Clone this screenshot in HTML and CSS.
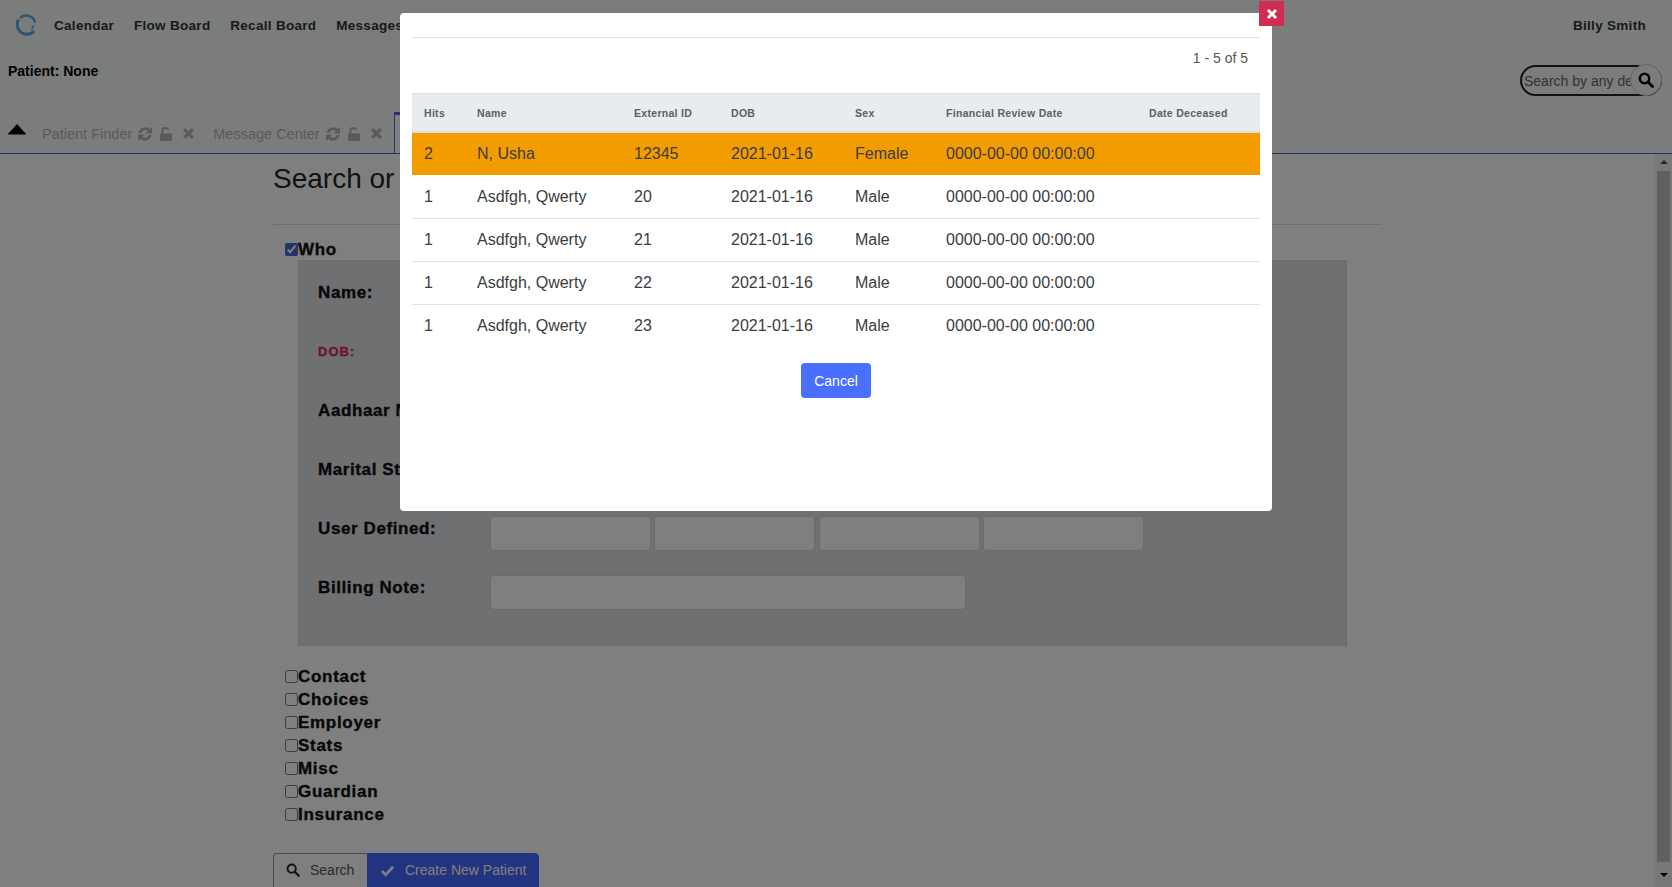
FILE: index.html
```html
<!DOCTYPE html>
<html lang="en">
<head>
<meta charset="UTF-8" />
<meta name="viewport" content="width=device-width, initial-scale=1" />
<title>Search or Add Patient</title>
<link rel="stylesheet" href="styles.css">
</head>
<body>

<header class="topbar">
  <div class="nav-row">
    <svg class="logo" viewBox="0 0 22 22" width="22" height="22">
      <path d="M5 4A9 9 0 0 1 20 8.500" fill="none" stroke="#5ea6e8" stroke-width="2.400"/>
      <path d="M3.500 5.500A9.500 9.500 0 0 0 3 14A9.500 9.500 0 0 0 19 17" fill="none" stroke="#5ea6e8" stroke-width="3"/>
      <path d="M16.500 15.500A7.500 7.500 0 0 0 18.500 11" fill="none" stroke="#5ea6e8" stroke-width="1.400"/>
    </svg>
    <nav class="menu">
      <a>Calendar</a>
      <a>Flow Board</a>
      <a>Recall Board</a>
      <a>Messages</a>
    </nav>
    <span class="user">Billy Smith</span>
  </div>
  <div class="patient-row">
    <strong class="patient">Patient: None</strong>
    <div class="searchbox">
      <span class="searchbox-text">Search by any de</span>
      <span class="searchbox-btn">
        <svg viewBox="0 0 16 16" width="16" height="16"><circle cx="6.500" cy="6.500" r="4.700" fill="none" stroke="#000" stroke-width="2.400"/><path d="M10 10l4.500 4.500" stroke="#000" stroke-width="2.800" stroke-linecap="round"/></svg>
      </span>
    </div>
  </div>
  <div class="tab-row">
    <svg class="caret" viewBox="0 0 20 12" width="20" height="12"><path d="M1.500 11h17L10 1.500z" fill="#000" stroke="#000" stroke-linejoin="round"/></svg>
    <div class="tab">
      Patient Finder
      <svg class="tab-icon" viewBox="0 0 16 16"><path d="M1.500 7A6.600 6.600 0 0 1 12.700 3.300L15 1v6.500H8.500l2.300-2.300A4 4 0 0 0 4.200 7zM14.500 9A6.600 6.600 0 0 1 3.300 12.700L1 15V8.500h6.500l-2.300 2.300A4 4 0 0 0 11.800 9z"/></svg>
      <svg class="tab-icon" viewBox="0 0 16 16"><path d="M2 7.500h1.500V4.800a3.800 3.800 0 0 1 7.500-.8H9a1.900 1.900 0 0 0-3.600.8v2.700H14v7.500H2z"/></svg>
      <svg class="tab-icon tab-x" viewBox="0 0 12 12"><path d="M2 2l8 8M10 2l-8 8" stroke="#b4b4b4" stroke-width="3"/></svg>
    </div>
    <div class="tab">
      Message Center
      <svg class="tab-icon" viewBox="0 0 16 16"><path d="M1.500 7A6.600 6.600 0 0 1 12.700 3.300L15 1v6.500H8.500l2.300-2.300A4 4 0 0 0 4.200 7zM14.500 9A6.600 6.600 0 0 1 3.300 12.700L1 15V8.500h6.500l-2.300 2.300A4 4 0 0 0 11.800 9z"/></svg>
      <svg class="tab-icon" viewBox="0 0 16 16"><path d="M2 7.500h1.500V4.800a3.800 3.800 0 0 1 7.500-.8H9a1.900 1.900 0 0 0-3.600.8v2.700H14v7.500H2z"/></svg>
      <svg class="tab-icon tab-x" viewBox="0 0 12 12"><path d="M2 2l8 8M10 2l-8 8" stroke="#b4b4b4" stroke-width="3"/></svg>
    </div>
    <div class="tab-active"></div>
  </div>
</header>

<div class="page">
  <main class="content">
    <h1 class="title">Search or</h1>
    <hr class="rule">

    <label class="section"><input type="checkbox" checked>Who</label>
    <div class="who-panel">
      <div class="who-row"><span class="who-label">Name:</span></div>
      <div class="who-row"><span class="who-label who-dob">DOB:</span></div>
      <div class="who-row"><span class="who-label">Aadhaar Number:</span></div>
      <div class="who-row"><span class="who-label">Marital Status:</span></div>
      <div class="who-row">
        <span class="who-label">User Defined:</span>
        <div class="fields">
          <input class="field" type="text">
          <input class="field" type="text">
          <input class="field" type="text">
          <input class="field" type="text">
        </div>
      </div>
      <div class="who-row">
        <span class="who-label">Billing Note:</span>
        <div class="fields">
          <input class="field field-wide" type="text">
        </div>
      </div>
    </div>

    <div class="section-list">
      <label class="section"><input type="checkbox">Contact</label>
      <label class="section"><input type="checkbox">Choices</label>
      <label class="section"><input type="checkbox">Employer</label>
      <label class="section"><input type="checkbox">Stats</label>
      <label class="section"><input type="checkbox">Misc</label>
      <label class="section"><input type="checkbox">Guardian</label>
      <label class="section"><input type="checkbox">Insurance</label>
    </div>

    <div class="actions">
      <button class="btn btn-search">
        <svg viewBox="0 0 16 16" width="14" height="14"><circle cx="6.500" cy="6.500" r="4.700" fill="none" stroke="#212529" stroke-width="2.200"/><path d="M10 10l4.500 4.500" stroke="#212529" stroke-width="2.600" stroke-linecap="round"/></svg>
        Search
      </button>
      <button class="btn btn-create">
        <svg viewBox="0 0 16 16" width="15" height="15"><path d="M2 8.500l4 4 8-8.500" fill="none" stroke="#fff" stroke-width="3"/></svg>
        Create New Patient
      </button>
    </div>
  </main>
  <div class="scrollbar">
    <span class="arrow-up"></span>
    <div class="thumb"></div>
    <span class="arrow-down"></span>
  </div>
</div>

<div class="overlay">
  <div class="modal">
    <button class="modal-close" aria-label="Close">
      <svg viewBox="0 0 12 12" width="12" height="12"><path d="M2 2l8 8M10 2l-8 8" stroke="#fff" stroke-width="3"/></svg>
    </button>
    <hr class="modal-rule">
    <div class="pager">1 - 5 of 5</div>
    <table class="hits">
      <colgroup>
        <col class="col-hits"><col class="col-name"><col class="col-ext"><col class="col-dob"><col class="col-sex"><col class="col-fin"><col>
      </colgroup>
      <thead>
        <tr>
          <th>Hits</th>
          <th>Name</th>
          <th>External ID</th>
          <th>DOB</th>
          <th>Sex</th>
          <th>Financial Review Date</th>
          <th>Date Deceased</th>
        </tr>
      </thead>
      <tbody>
        <tr class="hit-top"><td>2</td><td>N, Usha</td><td>12345</td><td>2021-01-16</td><td>Female</td><td>0000-00-00 00:00:00</td><td></td></tr>
        <tr><td>1</td><td>Asdfgh, Qwerty</td><td>20</td><td>2021-01-16</td><td>Male</td><td>0000-00-00 00:00:00</td><td></td></tr>
        <tr><td>1</td><td>Asdfgh, Qwerty</td><td>21</td><td>2021-01-16</td><td>Male</td><td>0000-00-00 00:00:00</td><td></td></tr>
        <tr><td>1</td><td>Asdfgh, Qwerty</td><td>22</td><td>2021-01-16</td><td>Male</td><td>0000-00-00 00:00:00</td><td></td></tr>
        <tr><td>1</td><td>Asdfgh, Qwerty</td><td>23</td><td>2021-01-16</td><td>Male</td><td>0000-00-00 00:00:00</td><td></td></tr>
      </tbody>
    </table>
    <div class="modal-foot"><button class="btn-cancel">Cancel</button></div>
  </div>
</div>

</body>
</html>
```

FILE: styles.css
```css
html, body { height: 100%; }
body { margin: 0; height: 100vh; overflow: hidden; display: flex; flex-direction: column; font-family: "Liberation Sans", Arial, sans-serif; color: #212529; background: #fff; }

/* top bar */
.topbar { background: #f6faf8; height: 154px; flex: none; box-sizing: border-box; border-bottom: 1px solid #4a66d8; display: flex; flex-direction: column; }
.nav-row { display: flex; align-items: center; height: 50px; padding-left: 15px; box-sizing: border-box; }
.logo { margin-right: 17px; }
.menu { display: flex; gap: 19.800px; }
.menu a, .user { font-size: 13.500px; font-weight: bold; letter-spacing: .3px; color: #333; }
.user { margin-left: auto; margin-right: 26px; }
.patient-row { height: 62px; display: flex; padding-left: 8px; position: relative; }
.patient { font-size: 14px; margin-top: 13px; color: #000; }
.searchbox { margin-left: auto; margin-right: 10px; margin-top: 15px; width: 142px; height: 31px; box-sizing: border-box; border: 2px solid #222; border-radius: 16px; display: flex; align-items: center; padding-left: 2px; position: relative; background: #f6faf8; }
.searchbox-text { font-size: 14px; color: #666; white-space: nowrap; overflow: hidden; width: 108px; }
.searchbox-btn { position: absolute; right: -2px; top: -3px; width: 30px; height: 30px; border: 1px solid #ccc; border-radius: 50%; background: #f6faf8; display: flex; align-items: center; justify-content: center; }
.tab-row { flex: 1; display: flex; align-items: center; position: relative; padding-left: 7px; }
.caret { margin-right: 15px; margin-top: -7px; }
.tab { display: flex; align-items: center; gap: 4px; font-size: 14.500px; color: #b4b4b4; margin-right: 11px; white-space: nowrap; padding-top: 2px; }
.tab + .tab { margin-left: 7px; }
.tab-icon { width: 16px; height: 16px; fill: #b4b4b4; margin-left: 1px; }
.tab-x { width: 13px; height: 13px; margin-left: 4px; }
.tab-active { align-self: stretch; width: 300px; border: 1px solid #4a66d8; border-top-width: 3px; border-bottom: 0; box-sizing: border-box; background: #fff; }

/* page below the bar */
.page { flex: 1; display: flex; min-height: 0; }
.content { flex: 1; padding-left: 273px; overflow: hidden; }
.title { font-size: 28px; font-weight: normal; line-height: 34px; margin: 8px 0 0; }
.rule { width: 1109px; margin: 28px 0 13px; border: 0; border-top: 1px solid #ddd; }
.section { display: flex; align-items: center; height: 23px; font-size: 17px; font-weight: bold; letter-spacing: .7px; -webkit-text-stroke: .4px #111; color: #111; margin-left: 12px; }
.section input { margin: 0; width: 13px; height: 13px; accent-color: #4a66d8; }
.who-panel { width: 1049px; height: 386px; margin: -1px 0 0 25px; box-sizing: border-box; background: #dfe1e5; border: 1px solid #d5d7db; padding-top: 16px; }
.who-row { display: flex; height: 59px; padding-left: 19px; }
.who-label { width: 172px; flex: none; font-size: 17px; font-weight: bold; letter-spacing: .6px; -webkit-text-stroke: .4px #111; color: #111; line-height: 32px; }
.who-dob { font-size: 13px; letter-spacing: 1px; color: #d92c58; -webkit-text-stroke: .4px #d92c58; }
.fields { display: flex; gap: 3.400px; margin-top: 3px; align-self: flex-start; }
.field { width: 161px; height: 35px; box-sizing: border-box; border: 1px solid #d5d7db; border-radius: 4px; background: #fff; }
.field-wide { width: 476px; }
.section-list { margin-top: 19px; display: flex; flex-direction: column; }
.actions { display: flex; margin-top: 27px; }
.btn { height: 36px; padding-bottom: 3px; font: 14px "Liberation Sans", Arial, sans-serif; display: flex; align-items: center; border: 1px solid #999; }
.btn-search { width: 94px; gap: 10px; padding-left: 12px; color: #555; background: #fff; border-radius: 4px 0 0 0; border-right: 0; }
.btn-create { width: 172px; gap: 10px; padding-left: 12px; color: #fff; background: #4568ff; border-color: #4568ff; border-radius: 0 4px 0 0; white-space: nowrap; }

.scrollbar { width: 17px; flex: none; background: #f1f1f1; display: flex; flex-direction: column; align-items: center; }
.arrow-up { flex: none; margin-top: 6px; width: 0; height: 0; border: 4px solid transparent; border-top: 0; border-bottom: 4px solid #505050; }
.thumb { flex: none; width: 13px; height: 691px; margin-top: 7px; background: #c1c1c1; }
.arrow-down { flex: none; margin-top: 11px; width: 0; height: 0; border: 4px solid transparent; border-bottom: 0; border-top: 4px solid #000; }

/* modal */
.overlay { position: fixed; inset: 0; background: rgba(0, 0, 0, .5); }
.modal { position: absolute; left: 400px; top: 13px; width: 872px; height: 498px; box-sizing: border-box; padding: 0 12px; background: #fff; border-radius: 4px; color: #3a3d40; }
.modal-close { position: absolute; right: -12px; top: -12px; width: 25px; height: 25px; padding: 0; border: 0; background: #d12d52; display: flex; align-items: center; justify-content: center; }
.modal-rule { margin: 24px 0 0; border: 0; border-top: 1px solid #dee2e6; }
.pager { text-align: right; font-size: 14px; line-height: 20px; margin-top: 10px; padding-right: 12px; color: #555; }
.hits { width: 848px; margin-top: 25px; border-collapse: collapse; table-layout: fixed; font-size: 16px; }
.col-hits { width: 53px; }
.col-name { width: 157px; }
.col-ext { width: 97px; }
.col-dob { width: 124px; }
.col-sex { width: 91px; }
.col-fin { width: 203px; }
.hits th { height: 37px; padding: 0 12px; text-align: left; font-size: 10.500px; letter-spacing: .3px; color: #5a6066; background: #e9ecef; border-top: 1px solid #dee2e6; border-bottom: 2px solid #dee2e6; }
.hits td { height: 43px; box-sizing: border-box; padding: 0 12px; border-bottom: 1px solid #dee2e6; white-space: nowrap; }
.hits tr:last-child td { border-bottom: 0; }
.hit-top td { background: #f39c00; border-bottom-color: #fff; }
.modal-foot { display: flex; justify-content: center; margin-top: 16px; }
.btn-cancel { width: 70px; height: 35px; border: 0; border-radius: 4px; background: #4a6fff; color: #fff; font: 14px "Liberation Sans", Arial, sans-serif; }
```
